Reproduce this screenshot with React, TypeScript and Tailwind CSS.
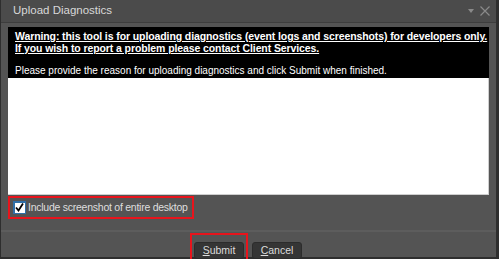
import { FC } from "react";

// Title bar with collapse + close glyphs
const TitleBar: FC = () => {
	return (
		<div className="h-[23px] shrink-0 flex items-center justify-between pl-[12px] pr-[6px] bg-[#4b4b4b] border-b border-[#3d3d3d]">
			<span className="text-[11.5px] text-[#d8d8d8]">Upload Diagnostics</span>
			<div className="flex items-center gap-[6px]">
				<svg width="6" height="4" viewBox="0 0 6 4">
					<path d="M0 0 L6 0 L3 4 Z" fill="#8a8a8a" />
				</svg>
				<svg width="10" height="10" viewBox="0 0 10 10">
					<path d="M0.5 0.5 L9.5 9.5 M9.5 0.5 L0.5 9.5" stroke="#8a8a8a" strokeWidth="1.2" />
				</svg>
			</div>
		</div>
	);
};

const DialogButton: FC<{ label: string }> = ({ label }) => {
	return (
		<button className="w-[50px] h-[17px] rounded-[3px] bg-[#353535] border border-[#2c2c2c] text-[10.5px] text-[#dcdcdc] leading-none">
			<span className="underline">{label[0]}</span>
			{label.slice(1)}
		</button>
	);
};

export default function App() {
	return (
		<div
			className="w-[499px] h-[259px] flex flex-col bg-[#545454] border-l border-r-[3px] border-b-2 border-[#2e2e2e]"
			style={{ fontFamily: '"Liberation Sans", Arial, sans-serif' }}
		>
			<TitleBar />

			<div className="flex-1 flex flex-col px-[7px] pt-[4px]">
				{/* Warning + instructions */}
				<div className="h-[51px] shrink-0 bg-black px-[7px] pt-[4px] text-[10px] leading-[11.5px] text-white whitespace-nowrap">
					<p className="font-bold underline text-[10.5px] tracking-[-0.1px]">
						Warning: this tool is for uploading diagnostics (event logs and screenshots) for developers only.
					</p>
					<p className="font-bold underline text-[10.5px] tracking-[-0.1px]">
						If you wish to report a problem please contact Client Services.
					</p>
					<p className="mt-[10.5px]">
						Please provide the reason for uploading diagnostics and click Submit when finished.
					</p>
				</div>

				{/* Reason text area */}
				<div className="h-[117px] shrink-0 bg-white border-r border-b border-[#cfcfcf]"></div>

				{/* Screenshot option */}
				<div className="mt-[1px] w-[186px] h-[23px] flex items-center gap-[2px] pl-[3px] border-[2px] border-[#e8141c]">
					<div className="w-[13px] h-[13px] flex items-center justify-center bg-[#2f6fa8]">
						<div className="w-[10px] h-[10px] bg-white flex items-center justify-center">
							<svg width="9" height="9" viewBox="0 0 9 9">
								<path d="M1 4.5 L3.5 7.5 L8 0.5" stroke="#000" strokeWidth="1.8" fill="none" />
							</svg>
						</div>
					</div>
					<span className="text-[10.5px] tracking-[-0.25px] text-[#dedede] whitespace-nowrap">
						Include screenshot of entire desktop
					</span>
				</div>
			</div>

			{/* Footer */}
			<div className="h-[27px] shrink-0 border-t-2 border-[#5d5d5d] flex items-start justify-center gap-[4px] pt-[1px] pr-[5px]">
				<div className="px-[2px] pt-[2px] pb-[1px] border-[2px] border-[#e8141c]">
					<DialogButton label="Submit" />
				</div>
				<div className="pt-[4px]">
					<DialogButton label="Cancel" />
				</div>
			</div>
		</div>
	);
}
